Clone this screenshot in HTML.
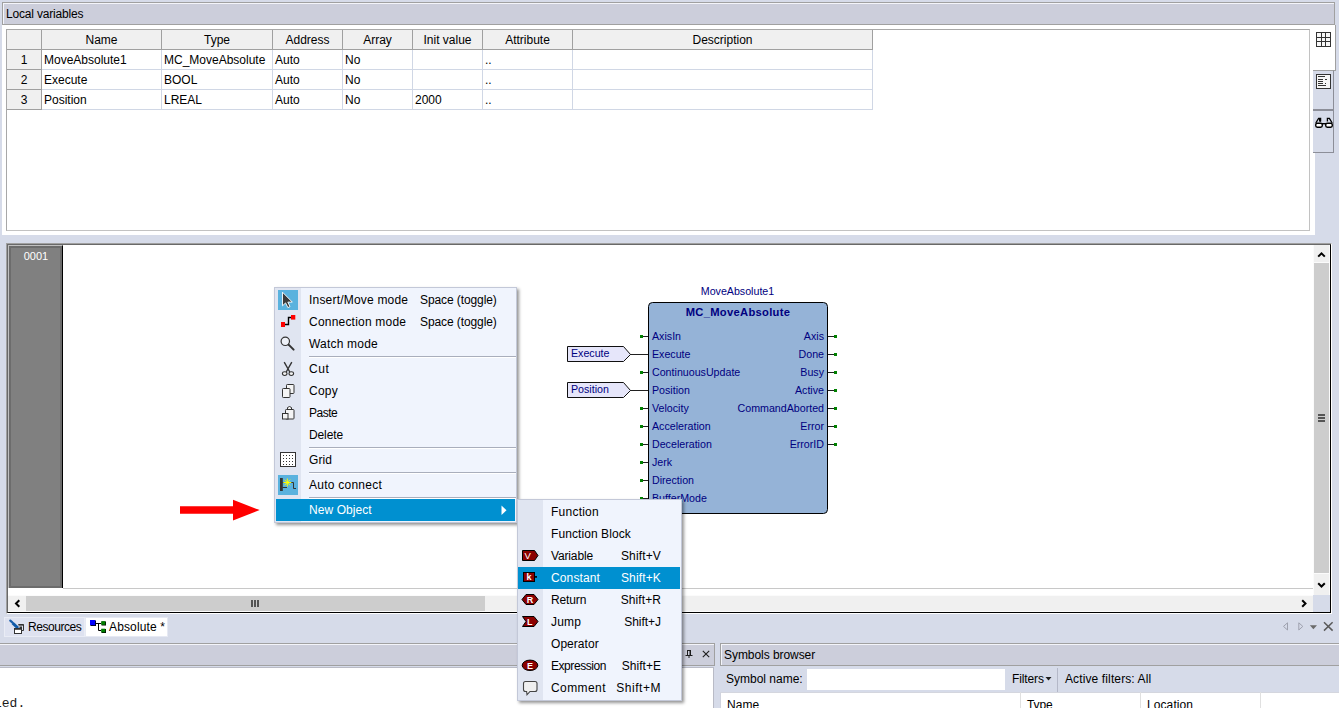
<!DOCTYPE html>
<html>
<head>
<meta charset="utf-8">
<title>Absolute</title>
<style>
html,body{margin:0;padding:0;}
body{width:1339px;height:708px;overflow:hidden;background:#D6DBE9;position:relative;font-family:"Liberation Sans",sans-serif;font-size:12px;color:#000;}
.abs{position:absolute;}
.ui{font-family:"Liberation Sans",sans-serif;font-size:12px;white-space:nowrap;position:absolute;line-height:14px;color:#000;}
.titlebar{position:absolute;background:#CCCEDB;border:1px solid #A0A0A0;box-shadow:inset 1px 1px 0 #F4F5FA;box-sizing:border-box;}
/* table */
.tv{position:absolute;left:6px;top:29px;width:1304px;height:202px;border:1px solid #A8A8A8;border-right-color:#C2C2C2;border-bottom-color:#C2C2C2;box-sizing:border-box;background:#fff;}
.cell{position:absolute;box-sizing:border-box;height:20px;line-height:20px;font-size:12px;white-space:nowrap;overflow:hidden;}
.hd{background:#F0F0F0;border-right:1px solid #A0A0A0;border-bottom:1px solid #A0A0A0;text-align:center;}
.dc{background:#fff;border-right:1px solid #D0D7E5;border-bottom:1px solid #D0D7E5;padding-left:2px;}
/* menus */
.menu{position:absolute;background:#F0F4FD;border:1px solid #C3C8D8;box-sizing:border-box;box-shadow:2px 2px 3px rgba(0,0,0,0.42);}
.menu .icol{position:absolute;left:1px;top:1px;bottom:1px;width:25px;background:#E0E5F1;}
.mi{position:absolute;left:1px;right:1px;height:22px;}
.mi.sel{background:#0090D0;}
.mi.sel .ui{color:#fff;}
.msep{position:absolute;height:1px;background:#A9AEBC;box-shadow:0 1px 0 #FFFFFF;}
.mic{position:absolute;}
/* FBD */
.fb{font-size:10.67px;color:#000080;position:absolute;white-space:nowrap;line-height:12px;}
</style>
</head>
<body>

<!-- ===== Local variables panel ===== -->
<div class="titlebar" style="left:2px;top:2px;width:1333px;height:23px;"></div>
<div class="ui" id="t_local" style="left:6px;top:7px;letter-spacing:-0.175px;">Local variables</div>
<div class="abs" style="left:2px;top:25px;width:1313px;height:210px;background:#fff;"></div>
<div class="tv" id="tv">
<div class="cell hd" style="left:0px;top:0px;width:35px;"></div>
<div class="cell hd" style="left:35px;top:0px;width:120px;">Name</div>
<div class="cell hd" style="left:155px;top:0px;width:111px;">Type</div>
<div class="cell hd" style="left:266px;top:0px;width:70px;">Address</div>
<div class="cell hd" style="left:336px;top:0px;width:70px;">Array</div>
<div class="cell hd" style="left:406px;top:0px;width:70px;">Init value</div>
<div class="cell hd" style="left:476px;top:0px;width:90px;">Attribute</div>
<div class="cell hd" style="left:566px;top:0px;width:300px;">Description</div>
<div class="cell hd" style="left:0px;top:20px;width:35px;">1</div>
<div class="cell dc" style="left:35px;top:20px;width:120px;">MoveAbsolute1</div>
<div class="cell dc" style="left:155px;top:20px;width:111px;">MC_MoveAbsolute</div>
<div class="cell dc" style="left:266px;top:20px;width:70px;">Auto</div>
<div class="cell dc" style="left:336px;top:20px;width:70px;">No</div>
<div class="cell dc" style="left:406px;top:20px;width:70px;"></div>
<div class="cell dc" style="left:476px;top:20px;width:90px;">..</div>
<div class="cell dc" style="left:566px;top:20px;width:300px;"></div>
<div class="cell hd" style="left:0px;top:40px;width:35px;">2</div>
<div class="cell dc" style="left:35px;top:40px;width:120px;">Execute</div>
<div class="cell dc" style="left:155px;top:40px;width:111px;">BOOL</div>
<div class="cell dc" style="left:266px;top:40px;width:70px;">Auto</div>
<div class="cell dc" style="left:336px;top:40px;width:70px;">No</div>
<div class="cell dc" style="left:406px;top:40px;width:70px;"></div>
<div class="cell dc" style="left:476px;top:40px;width:90px;">..</div>
<div class="cell dc" style="left:566px;top:40px;width:300px;"></div>
<div class="cell hd" style="left:0px;top:60px;width:35px;">3</div>
<div class="cell dc" style="left:35px;top:60px;width:120px;">Position</div>
<div class="cell dc" style="left:155px;top:60px;width:111px;">LREAL</div>
<div class="cell dc" style="left:266px;top:60px;width:70px;">Auto</div>
<div class="cell dc" style="left:336px;top:60px;width:70px;">No</div>
<div class="cell dc" style="left:406px;top:60px;width:70px;">2000</div>
<div class="cell dc" style="left:476px;top:60px;width:90px;">..</div>
<div class="cell dc" style="left:566px;top:60px;width:300px;"></div>
</div>

<!-- right side tabs -->
<div class="abs" style="left:1313px;top:25px;width:23px;height:46px;background:#fff;border-right:1px solid #A0A0A0;border-bottom:1px solid #A0A0A0;box-sizing:border-box;"></div>
<div class="abs" style="left:1313px;top:70px;width:21px;height:41px;background:#D6DBE9;border-right:1px solid #8C8E98;border-bottom:2px solid #8C8E98;border-top:1px solid #A0A0A0;box-sizing:border-box;"></div>
<div class="abs" style="left:1313px;top:111px;width:21px;height:42px;background:#D6DBE9;border-right:1px solid #8C8E98;border-bottom:1px solid #8C8E98;box-sizing:border-box;"></div>
<div class="abs" style="left:1315px;top:153px;width:24px;height:82px;background:#D6DBE9;"></div>

<!-- ===== Editor ===== -->
<div class="abs" id="editor" style="left:6px;top:243px;width:1326px;height:371px;background:#fff;box-sizing:border-box;border-top:1px solid #A0A0A0;border-left:1px solid #A0A0A0;border-right:1px solid #fff;border-bottom:1px solid #fff;">
<div class="abs" style="left:0;top:0;width:1324px;height:369px;box-sizing:border-box;border-top:1px solid #696969;border-left:1px solid #696969;border-right:1px solid #000;border-bottom:1px solid #000;"></div>
</div>
<!-- gutter -->
<div class="abs" style="left:8px;top:245px;width:55px;height:343px;background:#808080;box-sizing:border-box;border-top:1px solid #C0C0C0;border-left:1px solid #C0C0C0;border-right:1px solid #000;box-shadow:inset 2px 2px 0 #6C6C6C,inset -2px -2px 0 #6C6C6C;"></div>
<div class="abs" style="left:63px;top:588px;width:1250px;height:1px;background:#C8C8C8;"></div>
<div class="abs" id="t_0001" style="left:11px;top:250px;width:50px;text-align:center;color:#fff;font-size:11px;line-height:13px;">0001</div>
<!-- v scrollbar -->
<div class="abs" style="left:1313px;top:245px;width:17px;height:351px;background:#FBFBFB;"></div>
<div class="abs" style="left:1314px;top:245px;width:15px;height:350px;background:#F0F0F0;"></div>
<div class="abs" style="left:1314px;top:262px;width:15px;height:1px;background:#FBFBFB;"></div>
<div class="abs" style="left:1314px;top:573px;width:15px;height:1px;background:#FBFBFB;"></div>
<div class="abs" style="left:1314px;top:263px;width:15px;height:310px;background:#CDCDCD;"></div>
<svg class="abs" style="left:1314px;top:245px;" width="15" height="17" viewBox="0 0 15 17"><path d="M4.2 11.6 L7.5 8.3 L10.8 11.6" fill="none" stroke="#000" stroke-width="2"/></svg>
<svg class="abs" style="left:1314px;top:578px;" width="15" height="17" viewBox="0 0 15 17"><path d="M4.2 5.2 L7.5 8.5 L10.8 5.2" fill="none" stroke="#000" stroke-width="2"/></svg>
<div class="abs" style="left:1318px;top:414px;width:7px;height:2px;background:#555;box-shadow:0 3px 0 #555,0 6px 0 #555;"></div>
<!-- h scrollbar -->
<div class="abs" style="left:8px;top:595px;width:1305px;height:17px;background:#FBFBFB;"></div>
<div class="abs" style="left:8px;top:596px;width:1305px;height:15px;background:#F0F0F0;"></div>
<div class="abs" style="left:26px;top:596px;width:459px;height:15px;background:#CDCDCD;"></div>
<svg class="abs" style="left:8px;top:596px;" width="18" height="15" viewBox="0 0 18 15"><path d="M11.3 4.2 L8 7.5 L11.3 10.8" fill="none" stroke="#000" stroke-width="2"/></svg>
<svg class="abs" style="left:1295px;top:596px;" width="18" height="15" viewBox="0 0 18 15"><path d="M7.2 4.2 L10.5 7.5 L7.2 10.8" fill="none" stroke="#000" stroke-width="2"/></svg>
<div class="abs" style="left:251px;top:600px;width:2px;height:7px;background:#555;box-shadow:3px 0 0 #555,6px 0 0 #555;"></div>
<div class="abs" style="left:1313px;top:595px;width:17px;height:17px;background:#D6DBE9;"></div>
<!-- ===== FBD ===== -->
<svg class="abs" id="fbd" style="left:560px;top:280px;" width="290" height="240" viewBox="560 280 290 240" font-family="Liberation Sans, sans-serif" font-size="10.67" fill="#000080">
<rect x="648.5" y="302.5" width="179" height="211" rx="4" ry="4" fill="#95B3D7" stroke="#000" stroke-width="1"/>
<text x="737.5" y="295" text-anchor="middle">MoveAbsolute1</text>
<text x="738" y="316" text-anchor="middle" font-weight="bold" font-size="11.2" letter-spacing="0.3">MC_MoveAbsolute</text>
<text x="652" y="340">AxisIn</text>
<path d="M643 336.5H648" stroke="#202020" stroke-width="1" shape-rendering="crispEdges"/>
<rect x="640" y="335" width="3" height="3" fill="#008000" shape-rendering="crispEdges"/>
<text x="652" y="358">Execute</text>
<path d="M630 354.5H648" stroke="#202020" stroke-width="1" shape-rendering="crispEdges"/>
<path d="M567.5 346.5H623.5L630.5 354.5L623.5 361.5H567.5Z" fill="#E6E6FA" stroke="#101010" stroke-width="1"/>
<text x="571" y="357">Execute</text>
<text x="652" y="376">ContinuousUpdate</text>
<path d="M643 372.5H648" stroke="#202020" stroke-width="1" shape-rendering="crispEdges"/>
<rect x="640" y="371" width="3" height="3" fill="#008000" shape-rendering="crispEdges"/>
<text x="652" y="394">Position</text>
<path d="M630 390.5H648" stroke="#202020" stroke-width="1" shape-rendering="crispEdges"/>
<path d="M567.5 382.5H623.5L630.5 390.5L623.5 397.5H567.5Z" fill="#E6E6FA" stroke="#101010" stroke-width="1"/>
<text x="571" y="393">Position</text>
<text x="652" y="412">Velocity</text>
<path d="M643 408.5H648" stroke="#202020" stroke-width="1" shape-rendering="crispEdges"/>
<rect x="640" y="407" width="3" height="3" fill="#008000" shape-rendering="crispEdges"/>
<text x="652" y="430">Acceleration</text>
<path d="M643 426.5H648" stroke="#202020" stroke-width="1" shape-rendering="crispEdges"/>
<rect x="640" y="425" width="3" height="3" fill="#008000" shape-rendering="crispEdges"/>
<text x="652" y="448">Deceleration</text>
<path d="M643 444.5H648" stroke="#202020" stroke-width="1" shape-rendering="crispEdges"/>
<rect x="640" y="443" width="3" height="3" fill="#008000" shape-rendering="crispEdges"/>
<text x="652" y="466">Jerk</text>
<path d="M643 462.5H648" stroke="#202020" stroke-width="1" shape-rendering="crispEdges"/>
<rect x="640" y="461" width="3" height="3" fill="#008000" shape-rendering="crispEdges"/>
<text x="652" y="484">Direction</text>
<path d="M643 480.5H648" stroke="#202020" stroke-width="1" shape-rendering="crispEdges"/>
<rect x="640" y="479" width="3" height="3" fill="#008000" shape-rendering="crispEdges"/>
<text x="652" y="502">BufferMode</text>
<path d="M643 498.5H648" stroke="#202020" stroke-width="1" shape-rendering="crispEdges"/>
<rect x="640" y="497" width="3" height="3" fill="#008000" shape-rendering="crispEdges"/>
<text x="824" y="340" text-anchor="end">Axis</text>
<path d="M828 336.5H834" stroke="#202020" stroke-width="1" shape-rendering="crispEdges"/>
<rect x="834" y="335" width="3" height="3" fill="#008000" shape-rendering="crispEdges"/>
<text x="824" y="358" text-anchor="end">Done</text>
<path d="M828 354.5H834" stroke="#202020" stroke-width="1" shape-rendering="crispEdges"/>
<rect x="834" y="353" width="3" height="3" fill="#008000" shape-rendering="crispEdges"/>
<text x="824" y="376" text-anchor="end">Busy</text>
<path d="M828 372.5H834" stroke="#202020" stroke-width="1" shape-rendering="crispEdges"/>
<rect x="834" y="371" width="3" height="3" fill="#008000" shape-rendering="crispEdges"/>
<text x="824" y="394" text-anchor="end">Active</text>
<path d="M828 390.5H834" stroke="#202020" stroke-width="1" shape-rendering="crispEdges"/>
<rect x="834" y="389" width="3" height="3" fill="#008000" shape-rendering="crispEdges"/>
<text x="824" y="412" text-anchor="end">CommandAborted</text>
<path d="M828 408.5H834" stroke="#202020" stroke-width="1" shape-rendering="crispEdges"/>
<rect x="834" y="407" width="3" height="3" fill="#008000" shape-rendering="crispEdges"/>
<text x="824" y="430" text-anchor="end">Error</text>
<path d="M828 426.5H834" stroke="#202020" stroke-width="1" shape-rendering="crispEdges"/>
<rect x="834" y="425" width="3" height="3" fill="#008000" shape-rendering="crispEdges"/>
<text x="824" y="448" text-anchor="end">ErrorID</text>
<path d="M828 444.5H834" stroke="#202020" stroke-width="1" shape-rendering="crispEdges"/>
<rect x="834" y="443" width="3" height="3" fill="#008000" shape-rendering="crispEdges"/>
</svg>
<svg class="abs" style="left:178px;top:496px;" width="84" height="28" viewBox="178 496 84 28"><path d="M180 506.3H233V499.7L259.7 510.1L233 520.6V513.7H180Z" fill="#FF0000"/></svg>

<!-- ===== doc tab strip ===== -->
<div class="abs" style="left:4px;top:617px;width:81px;height:20px;background:#DEE2F0;border:1px solid #E9ECF5;box-sizing:border-box;"></div>
<div class="abs" style="left:85px;top:617px;width:83px;height:20px;background:#fff;border:1px solid #E6E9F3;box-sizing:border-box;"></div>
<div class="ui" id="t_res" style="left:28px;top:620px;letter-spacing:-0.445px;">Resources</div>
<div class="ui" id="t_abs" style="left:109px;top:620px;letter-spacing:0.133px;">Absolute *</div>

<!-- ===== bottom panels ===== -->
<div class="titlebar" style="left:-10px;top:643px;width:725px;height:23px;"></div>
<div class="abs" style="left:-10px;top:667px;width:724px;height:50px;background:#fff;border:1px solid #B9BBC6;box-sizing:border-box;"></div>
<div class="abs" id="t_ed" style="left:-6px;top:696px;color:#1A1A1A;font-family:'Liberation Mono',monospace;font-size:13px;line-height:15px;white-space:pre;">led.</div>
<svg class="abs" style="left:685px;top:649px;" width="8" height="10" viewBox="0 0 8 10"><path d="M2.5 1V6M5.5 1V6M2 1.5H6M0.5 6.5H7.5M4 7V9" fill="none" stroke="#1E1E1E" stroke-width="1"/><path d="M5 1V6" stroke="#1E1E1E" stroke-width="1"/></svg>
<svg class="abs" style="left:702px;top:650px;" width="8" height="8" viewBox="0 0 8 8"><path d="M0.8 0.8L7.2 7.2M7.2 0.8L0.8 7.2" stroke="#1E1E1E" stroke-width="1.1"/></svg>

<div class="titlebar" style="left:720px;top:643px;width:640px;height:23px;"></div>
<div class="ui" id="t_symb" style="left:724px;top:648px;letter-spacing:-0.059px;">Symbols browser</div>
<div class="ui" id="t_symn" style="left:726px;top:672px;letter-spacing:-0.0px;">Symbol name:</div>
<div class="abs" style="left:807px;top:669px;width:198px;height:21px;background:#fff;"></div>
<div class="ui" id="t_filt" style="left:1012px;top:672px;letter-spacing:-0.129px;">Filters</div>
<svg class="abs" style="left:1045px;top:677px;" width="7" height="4" viewBox="0 0 7 4"><path d="M0.5 0H6.5L3.5 3.5Z" fill="#1E1E1E"/></svg>
<div class="abs" style="left:1057px;top:668px;width:1px;height:24px;background:#B4B8C8;"></div>
<div class="ui" id="t_actf" style="left:1065px;top:672px;letter-spacing:0.12px;">Active filters: All</div>
<div class="abs" style="left:720px;top:692px;width:640px;height:30px;background:#fff;border-left:1px solid #D0D3DE;border-top:1px solid #D4D6DE;box-sizing:border-box;"></div>
<div class="abs" style="left:1020px;top:692px;width:1px;height:20px;background:#E0E0E0;"></div>
<div class="abs" style="left:1140px;top:692px;width:1px;height:20px;background:#E0E0E0;"></div>
<div class="abs" style="left:1260px;top:692px;width:1px;height:20px;background:#E0E0E0;"></div>
<div class="ui" id="t_hname" style="left:727px;top:698px;letter-spacing:0.028px;">Name</div>
<div class="ui" id="t_htype" style="left:1027px;top:698px;letter-spacing:-0.105px;">Type</div>
<div class="ui" id="t_hloc" style="left:1147px;top:698px;letter-spacing:0.089px;">Location</div>

<!-- ===== context menu ===== -->
<div class="menu" id="menu1" style="left:274px;top:287px;width:243px;height:236px;"><div class="icol" style="width:26px;left:0;top:0;bottom:0;"></div></div>
<div class="mi" style="left:276px;top:289px;width:239px;"><div class="ui" id="m_ins" style="left:33px;top:4px;letter-spacing:0.197px;">Insert/Move mode</div><div class="ui" id="m_ins_s" style="left:144px;top:4px;letter-spacing:-0.096px;">Space (toggle)</div></div>
<div class="mi" style="left:276px;top:311px;width:239px;"><div class="ui" id="m_con" style="left:33px;top:4px;letter-spacing:0.21px;">Connection mode</div><div class="ui" id="m_con_s" style="left:144px;top:4px;letter-spacing:-0.096px;">Space (toggle)</div></div>
<div class="mi" style="left:276px;top:333px;width:239px;"><div class="ui" id="m_wat" style="left:33px;top:4px;letter-spacing:0.198px;">Watch mode</div></div>
<div class="mi" style="left:276px;top:358px;width:239px;"><div class="ui" id="m_cut" style="left:33px;top:4px;letter-spacing:0.556px;">Cut</div></div>
<div class="mi" style="left:276px;top:380px;width:239px;"><div class="ui" id="m_cop" style="left:33px;top:4px;letter-spacing:0.261px;">Copy</div></div>
<div class="mi" style="left:276px;top:402px;width:239px;"><div class="ui" id="m_pas" style="left:33px;top:4px;letter-spacing:-0.472px;">Paste</div></div>
<div class="mi" style="left:276px;top:424px;width:239px;"><div class="ui" id="m_del" style="left:33px;top:4px;letter-spacing:-0.117px;">Delete</div></div>
<div class="mi" style="left:276px;top:449px;width:239px;"><div class="ui" id="m_gri" style="left:33px;top:4px;letter-spacing:0.043px;">Grid</div></div>
<div class="mi" style="left:276px;top:474px;width:239px;"><div class="ui" id="m_aut" style="left:33px;top:4px;letter-spacing:0.249px;">Auto connect</div></div>
<div class="mi sel" style="left:276px;top:499px;width:239px;"><div class="ui" id="m_new" style="left:33px;top:4px;letter-spacing:0.074px;">New Object</div></div>
<div class="msep" style="left:309px;top:356px;width:207px;"></div>
<div class="msep" style="left:309px;top:447px;width:207px;"></div>
<div class="msep" style="left:309px;top:472px;width:207px;"></div>
<div class="msep" style="left:309px;top:497px;width:207px;"></div>
<svg class="abs" style="left:500px;top:505px;" width="8" height="11" viewBox="0 0 8 11"><path d="M1.5 0.5L6.5 5.2L1.5 10Z" fill="#fff"/></svg>
<div class="menu" id="menu2" style="left:517px;top:499px;width:165px;height:202px;"><div class="icol" style="width:25px;left:0;top:0;bottom:0;"></div></div>
<div class="mi" style="left:518px;top:501px;width:162px;"><div class="ui" id="s_fun" style="left:33px;top:4px;letter-spacing:0.238px;">Function</div></div>
<div class="mi" style="left:518px;top:523px;width:162px;"><div class="ui" id="s_fb" style="left:33px;top:4px;letter-spacing:0.077px;">Function Block</div></div>
<div class="mi" style="left:518px;top:545px;width:162px;"><div class="ui" id="s_var" style="left:33px;top:4px;letter-spacing:-0.149px;">Variable</div><div class="ui" id="s_var_s" style="right:19px;top:4px;letter-spacing:0.145px;">Shift+V</div></div>
<div class="mi sel" style="left:518px;top:567px;width:162px;"><div class="ui" id="s_con" style="left:33px;top:4px;letter-spacing:0.124px;">Constant</div><div class="ui" id="s_con_s" style="right:19px;top:4px;letter-spacing:0.145px;">Shift+K</div></div>
<div class="mi" style="left:518px;top:589px;width:162px;"><div class="ui" id="s_ret" style="left:33px;top:4px;letter-spacing:-0.126px;">Return</div><div class="ui" id="s_ret_s" style="right:19px;top:4px;letter-spacing:0.085px;">Shift+R</div></div>
<div class="mi" style="left:518px;top:611px;width:162px;"><div class="ui" id="s_jmp" style="left:33px;top:4px;letter-spacing:0.152px;">Jump</div><div class="ui" id="s_jmp_s" style="right:19px;top:4px;letter-spacing:-0.039px;">Shift+J</div></div>
<div class="mi" style="left:518px;top:633px;width:162px;"><div class="ui" id="s_op" style="left:33px;top:4px;letter-spacing:0.049px;">Operator</div></div>
<div class="mi" style="left:518px;top:655px;width:162px;"><div class="ui" id="s_exp" style="left:33px;top:4px;letter-spacing:-0.442px;">Expression</div><div class="ui" id="s_exp_s" style="right:19px;top:4px;letter-spacing:0.028px;">Shift+E</div></div>
<div class="mi" style="left:518px;top:677px;width:162px;"><div class="ui" id="s_com" style="left:33px;top:4px;letter-spacing:0.414px;">Comment</div><div class="ui" id="s_com_s" style="right:19px;top:4px;letter-spacing:0.531px;">Shift+M</div></div>

<!-- ===== menu icons ===== -->
<svg class="abs" id="mic1" style="left:274px;top:287px;" width="30" height="236" viewBox="274 287 30 236">
<rect x="278" y="290" width="20" height="20" fill="#5AB2DE"/>
<path d="M282.5 292.2V305.8L285.6 302.9L287.9 307.6L290 306.6L287.8 302.1H292.3Z" fill="#3A3A3A" stroke="#fff" stroke-width="0.9" stroke-linejoin="round"/>
<path d="M285 324.5H288.5V317.5H291" fill="none" stroke="#000" stroke-width="1.4"/>
<rect x="281" y="322" width="4" height="5" fill="#FF0000"/><rect x="291" y="315" width="4.3" height="4.6" fill="#FF0000"/>
<circle cx="285.3" cy="341.3" r="4.2" fill="#EEF1F8" stroke="#333" stroke-width="1.2"/><path d="M288.6 344.6L293.6 349.6" stroke="#333" stroke-width="2" stroke-linecap="round"/>
<path d="M284.2 362.2L289.8 372M291.8 362.2L286.2 372" fill="none" stroke="#333" stroke-width="1.4"/><ellipse cx="284.7" cy="373.6" rx="2.3" ry="1.9" fill="#F2F2F2" stroke="#333" stroke-width="1.1"/><ellipse cx="291.3" cy="373.6" rx="2.3" ry="1.9" fill="#F2F2F2" stroke="#333" stroke-width="1.1"/>
<rect x="286.5" y="384.5" width="7.5" height="9" rx="0.8" fill="#F4F4F4" stroke="#333" stroke-width="1"/><rect x="282.5" y="388.5" width="7.5" height="9" rx="0.8" fill="#F4F4F4" stroke="#333" stroke-width="1"/>
<path d="M287.5 409.5V407.5Q289.5 405.5 291.5 407.5V409.5" fill="#F4F4F4" stroke="#333" stroke-width="1"/><rect x="285.5" y="409.5" width="8.5" height="9.5" rx="0.8" fill="#F4F4F4" stroke="#333" stroke-width="1"/><rect x="282.5" y="413.5" width="5.5" height="5.5" fill="#F4F4F4" stroke="#333" stroke-width="1"/>
<rect x="280.5" y="452.5" width="15" height="14" fill="#fff" stroke="#333" stroke-width="1"/>
<g fill="#333" shape-rendering="crispEdges"><rect x="283" y="455" width="1" height="1"/><rect x="283" y="458" width="1" height="1"/><rect x="283" y="461" width="1" height="1"/><rect x="283" y="464" width="1" height="1"/><rect x="286" y="455" width="1" height="1"/><rect x="286" y="458" width="1" height="1"/><rect x="286" y="461" width="1" height="1"/><rect x="286" y="464" width="1" height="1"/><rect x="289" y="455" width="1" height="1"/><rect x="289" y="458" width="1" height="1"/><rect x="289" y="461" width="1" height="1"/><rect x="289" y="464" width="1" height="1"/><rect x="292" y="455" width="1" height="1"/><rect x="292" y="458" width="1" height="1"/><rect x="292" y="461" width="1" height="1"/><rect x="292" y="464" width="1" height="1"/></g>
<rect x="278" y="475" width="20" height="20" fill="#5AB2DE"/>
<rect x="280" y="478" width="2.8" height="13" fill="#333"/><path d="M282.5 482.5H293.5V488.5H296M282.5 487.5H287" fill="none" stroke="#333" stroke-width="1"/>
<path d="M287.3 478.5V486.5M283.3 482.5H291.3M284.5 479.7L290.1 485.3M290.1 479.7L284.5 485.3" stroke="#FFFF00" stroke-width="1"/>
</svg>
<svg class="abs" id="mic2" style="left:517px;top:499px;" width="26" height="202" viewBox="517 499 26 202" font-family="Liberation Sans, sans-serif" font-weight="bold" font-size="9" fill="#fff" text-anchor="middle">
<path d="M522.5 550.5H534.5L538 555.5L534.5 560.5H522.5Z" fill="#8B0000" stroke="#000" stroke-width="1"/><text x="527.6" y="559.2" font-weight="normal" font-size="9.5">V</text>
<rect x="535" y="576.1" width="2" height="1.6" fill="#000"/><rect x="523.5" y="572.5" width="11" height="9" fill="#8B0000" stroke="#000" stroke-width="1"/><text x="529" y="580.3">k</text>
<path d="M522 599.5L526 594.5H534L538 599.5L534 604.5H526Z" fill="#8B0000" stroke="#000" stroke-width="1"/><text x="530" y="603">R</text>
<path d="M522.5 616.5H534L538 621.5L534 626.5H522.5L526 621.5Z" fill="#8B0000" stroke="#000" stroke-width="1"/><text x="529.8" y="625">L</text>
<ellipse cx="530" cy="665.3" rx="7.8" ry="5.2" fill="#8B0000" stroke="#000" stroke-width="1"/><text x="530" y="668.7">E</text>
<path d="M525.5 681.5H535Q537 681.5 537 683.5V689.5Q537 691.5 535 691.5H530L527 694.8L526.6 691.5H525.5Q523.5 691.5 523.5 689.5V683.5Q523.5 681.5 525.5 681.5Z" fill="#EFEFEF" stroke="#444" stroke-width="1.1"/>
</svg>

<!-- ===== misc icons ===== -->
<svg class="abs" style="left:1313px;top:25px;" width="26" height="130" viewBox="1313 25 26 130" shape-rendering="crispEdges">
<rect x="1316" y="32" width="15" height="15" fill="#333"/>
<g fill="#F8F8F8"><rect x="1317" y="33" width="4" height="4"/><rect x="1317" y="38" width="4" height="3"/><rect x="1317" y="42" width="4" height="4"/><rect x="1322" y="33" width="3" height="4"/><rect x="1322" y="38" width="3" height="3"/><rect x="1322" y="42" width="3" height="4"/><rect x="1326" y="33" width="4" height="4"/><rect x="1326" y="38" width="4" height="3"/><rect x="1326" y="42" width="4" height="4"/></g>
<rect x="1316.5" y="74.5" width="14" height="14" fill="#F6F6F6" stroke="#333" stroke-width="1"/>
<g fill="#333"><rect x="1318" y="76" width="7" height="1"/><rect x="1318" y="79" width="5" height="1"/><rect x="1325" y="79" width="2" height="1"/><rect x="1318" y="81" width="5" height="1"/><rect x="1318" y="83" width="5" height="1"/><rect x="1325" y="83" width="1" height="1"/><rect x="1318" y="85" width="8" height="1"/></g>
</svg>
<svg class="abs" style="left:1313px;top:114px;" width="22" height="18" viewBox="1313 114 22 18">
<rect x="1315.7" y="123.2" width="6.6" height="4" rx="1.6" fill="#fff" stroke="#000" stroke-width="1.4"/><rect x="1325.7" y="123.2" width="6.6" height="4" rx="1.6" fill="#fff" stroke="#000" stroke-width="1.4"/>
<path d="M1322 123.7H1326" stroke="#000" stroke-width="1.4"/><path d="M1315.8 123L1318.6 118.4H1320.6V121.5M1332.2 123L1329.4 118.4H1327.4V121.5" fill="none" stroke="#000" stroke-width="1.3"/><rect x="1319" y="118" width="2" height="3.6" fill="#000"/>
</svg>
<svg class="abs" style="left:4px;top:617px;" width="104" height="20" viewBox="4 617 104 20">
<path d="M10.3 620.6L12.3 622.4" stroke="#1B5FAA" stroke-width="2.2" stroke-linecap="round"/><path d="M12.6 623L18 628.2" stroke="#0F5AA8" stroke-width="3"/>
<path d="M18.5 624.6H23.5V630.5H21.5" fill="none" stroke="#333" stroke-width="1"/><path d="M18.5 624.8H23.5" stroke="#333" stroke-width="1.6"/><rect x="19.5" y="626.5" width="2.5" height="2" fill="#333"/>
<rect x="14.5" y="628.5" width="7" height="5" fill="#fff" stroke="#333" stroke-width="1"/><path d="M14.5 629H21.5" stroke="#333" stroke-width="1.6"/>
<path d="M96 623.5H101M98.5 623.5V630.5H101" fill="none" stroke="#000" stroke-width="1"/>
<rect x="90.5" y="620.5" width="5.5" height="5.5" fill="#000"/><rect x="90" y="620" width="5.2" height="5.2" fill="#0000FF"/>
<rect x="101.5" y="621.5" width="4.5" height="4" fill="#000"/><rect x="101.3" y="621.2" width="4" height="3.6" fill="#008000"/>
<rect x="101.5" y="629" width="4.5" height="4" fill="#000"/><rect x="101.3" y="628.7" width="4" height="3.6" fill="#008000"/>
</svg>
<svg class="abs" style="left:1280px;top:619px;" width="56" height="14" viewBox="1280 619 56 14">
<path d="M1287.5 622.8V630L1283.5 626.4Z" fill="none" stroke="#9EA1AE" stroke-width="1"/><path d="M1298.8 622.8V630L1302.8 626.4Z" fill="none" stroke="#9EA1AE" stroke-width="1"/>
<path d="M1309.8 625.3H1317L1313.4 629.3Z" fill="#6A6A6A"/><path d="M1324 622.2L1332.6 630.6M1332.6 622.2L1324 630.6" stroke="#5A5A5A" stroke-width="1.5"/>
</svg>

</body>
</html>
